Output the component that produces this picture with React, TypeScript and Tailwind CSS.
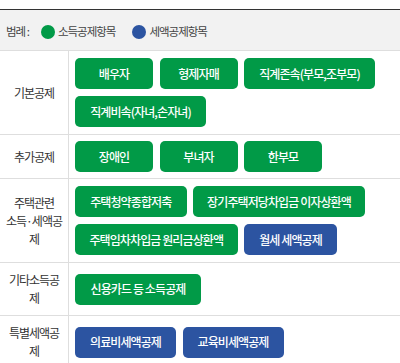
import React from "react";

type Kind = "income" | "tax";

type Item = { label: string; w: string; kind: Kind };

type Row = { title: string[]; lines: Item[][]; pad: string };

const rows: Row[] = [
  {
    title: ["기본공제"],
    pad: "py-[7px]",
    lines: [
      [
        { label: "배우자", w: "w-[78px]", kind: "income" },
        { label: "형제자매", w: "w-[78px]", kind: "income" },
        { label: "직계존속(부모,조부모)", w: "w-[131px]", kind: "income" },
      ],
      [{ label: "직계비속(자녀,손자녀)", w: "w-[131px]", kind: "income" }],
    ],
  },
  {
    title: ["추가공제"],
    pad: "py-[6px]",
    lines: [
      [
        { label: "장애인", w: "w-[78px]", kind: "income" },
        { label: "부녀자", w: "w-[78px]", kind: "income" },
        { label: "한부모", w: "w-[78px]", kind: "income" },
      ],
    ],
  },
  {
    title: ["주택관련", "소득·세액공", "제"],
    pad: "py-[7px]",
    lines: [
      [
        { label: "주택청약종합저축", w: "w-[111.5px]", kind: "income" },
        { label: "장기주택저당차입금 이자상환액", w: "w-[172px]", kind: "income" },
      ],
      [
        { label: "주택임차차입금 원리금상환액", w: "w-[162.5px]", kind: "income" },
        { label: "월세 세액공제", w: "w-[93px]", kind: "tax" },
      ],
    ],
  },
  {
    title: ["기타소득공", "제"],
    pad: "py-[6px]",
    lines: [[{ label: "신용카드 등 소득공제", w: "w-[126px]", kind: "income" }]],
  },
  {
    title: ["특별세액공", "제"],
    pad: "py-[6px]",
    lines: [
      [
        { label: "의료비세액공제", w: "w-[101px]", kind: "tax" },
        { label: "교육비세액공제", w: "w-[101px]", kind: "tax" },
      ],
    ],
  },
];

const font = "font-['Noto_Sans_CJK_KR','Noto_Sans',sans-serif]";

function DeductionButton({ item }: { item: Item }) {
  const bg = item.kind === "income" ? "bg-[#019a47]" : "bg-[#2c54a1]";
  return (
    <button
      type="button"
      className={`${item.w} ${bg} h-[31px] shrink-0 rounded-[5px] text-white text-[12px] font-medium tracking-[-0.9px] whitespace-nowrap flex items-center justify-center`}
    >
      {item.label}
    </button>
  );
}

export default function App() {
  return (
    <div className={`w-[400px] h-[363px] overflow-hidden bg-white ${font}`}>
      <div className="h-[9px]" />
      {/* legend */}
      <div className="border-t border-[#333] border-b border-b-[#dedede] bg-[#f2f2f2] h-[42px] pt-[4px] pl-[6px] flex items-center text-[11.5px] tracking-[-1px] text-[#444]">
        <span>범례 :</span>
        <span className="ml-[12px] w-[14px] h-[14px] rounded-full bg-[#019a47]" />
        <span className="ml-[3px]">소득공제항목</span>
        <span className="ml-[17px] w-[14px] h-[14px] rounded-full bg-[#2c54a1]" />
        <span className="ml-[3px]">세액공제항목</span>
      </div>
      {/* deduction table */}
      {rows.map((row) => (
        <div key={row.title.join("")} className="flex border-b border-[#dedede]">
          <div className="w-[69px] shrink-0 border-r border-[#dedede] py-[8px] flex flex-col items-center justify-center text-[12px] leading-[18px] tracking-[-1px] text-[#333]">
            {row.title.map((t) => (
              <span key={t}>{t}</span>
            ))}
          </div>
          <div className={`flex-1 pl-[6px] ${row.pad} flex flex-col justify-center gap-y-[7px]`}>
            {row.lines.map((line, i) => (
              <div key={i} className="flex gap-x-[6.5px]">
                {line.map((item) => (
                  <DeductionButton key={item.label} item={item} />
                ))}
              </div>
            ))}
          </div>
        </div>
      ))}
    </div>
  );
}
